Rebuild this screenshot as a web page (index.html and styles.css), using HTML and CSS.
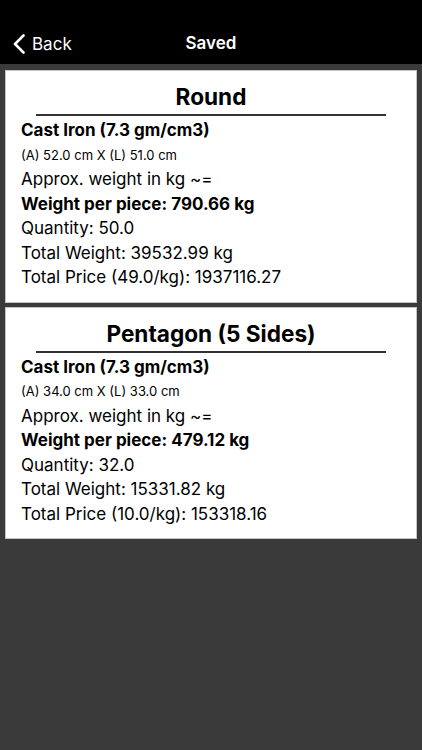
FILE: index.html
```html
<!DOCTYPE html>
<html>
<head>
<meta charset="utf-8">
<link rel="stylesheet" href="styles.css">
</head>
<body>
<header class="navbar">
  <div class="back">
    <svg class="chev" width="14" height="20" viewBox="0 0 14 20"><path d="M11.5 1.5 L3 10 L11.5 18.5" fill="none" stroke="#fff" stroke-width="2.6" stroke-linecap="round" stroke-linejoin="round"/></svg>
    <span>Back</span>
  </div>
  <div class="title">Saved</div>
</header>
<main class="list">
  <section class="card">
    <h2 class="card-title">Round</h2>
    <div class="rule"></div>
    <p class="row bold">Cast Iron (7.3 gm/cm3)</p>
    <p class="row small">(A) 52.0 cm X (L) 51.0 cm</p>
    <p class="row">Approx. weight in kg ~=</p>
    <p class="row bold">Weight per piece: 790.66 kg</p>
    <p class="row">Quantity: 50.0</p>
    <p class="row">Total Weight: 39532.99 kg</p>
    <p class="row">Total Price (49.0/kg): 1937116.27</p>
  </section>
  <section class="card">
    <h2 class="card-title">Pentagon (5 Sides)</h2>
    <div class="rule"></div>
    <p class="row bold">Cast Iron (7.3 gm/cm3)</p>
    <p class="row small">(A) 34.0 cm X (L) 33.0 cm</p>
    <p class="row">Approx. weight in kg ~=</p>
    <p class="row bold">Weight per piece: 479.12 kg</p>
    <p class="row">Quantity: 32.0</p>
    <p class="row">Total Weight: 15331.82 kg</p>
    <p class="row">Total Price (10.0/kg): 153318.16</p>
  </section>
</main>
</body>
</html>
```
FILE: styles.css
```css
html, body {
  margin: 0;
  padding: 0;
  height: 100%;
}
body {
  background: #3a3a3a;
  font-family: Inter, "Liberation Sans", Arial, sans-serif;
  color: #000;
}
.navbar {
  height: 64px;
  background: #000;
  color: #fff;
  position: relative;
  display: flex;
  align-items: flex-end;
  justify-content: center;
  box-sizing: border-box;
}
.back {
  position: absolute;
  left: 12px;
  top: 34px;
  display: flex;
  align-items: center;
  gap: 6px;
  font-size: 17px;
  line-height: 20px;
}
.chev {
  display: block;
}
.title {
  font-size: 17px;
  font-weight: 600;
  line-height: 20px;
  margin-bottom: 11px;
}
.list {
  display: flex;
  flex-direction: column;
  gap: 4px;
  padding: 6px 5px;
}
.card {
  background: #fff;
  border: 1px solid #c4c4c4;
  padding: 12px 15px 12px;
}
.card-title {
  margin: 0;
  text-align: center;
  font-size: 22.6px;
  line-height: 28px;
  font-weight: 700;
}
.rule {
  height: 2px;
  background: #333;
  margin: 3px 15px 2px;
}
.row {
  margin: 0;
  font-size: 17px;
  line-height: 24.5px;
}
.bold {
  font-weight: 700;
}
.small {
  font-size: 13px;
}
```
